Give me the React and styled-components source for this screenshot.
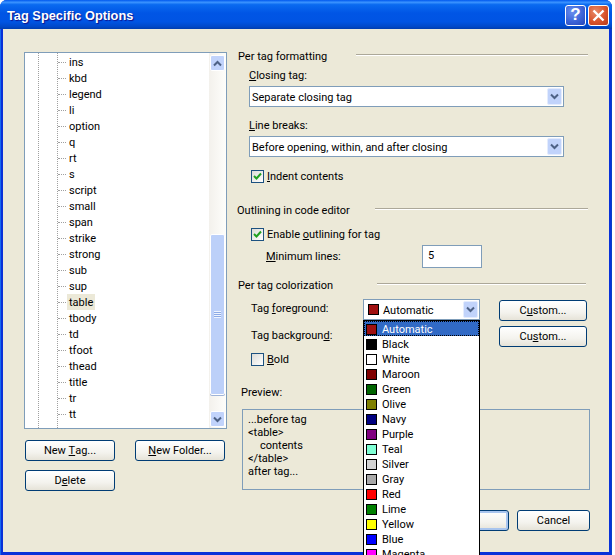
import React from "react";
import styled, { createGlobalStyle } from "styled-components";

const TAGS = ["ins", "kbd", "legend", "li", "option", "q", "rt", "s", "script", "small", "span", "strike", "strong", "sub", "sup", "table", "tbody", "td", "tfoot", "thead", "title", "tr", "tt"];

const COLORS = [
  ["Automatic", "#a01010"],
  ["Black", "#000000"],
  ["White", "#ffffff"],
  ["Maroon", "#800000"],
  ["Green", "#006400"],
  ["Olive", "#808000"],
  ["Navy", "#000080"],
  ["Purple", "#800080"],
  ["Teal", "#7fffd4"],
  ["Silver", "#d3d3d3"],
  ["Gray", "#a9a9a9"],
  ["Red", "#ff0000"],
  ["Lime", "#008000"],
  ["Yellow", "#ffff00"],
  ["Blue", "#0000ff"],
  ["Magenta", "#ff00ff"],
];

const PREVIEW = ["...before tag", "<table>", "contents", "</table>", "after tag..."];

function Chevron({ up }) {
  return (
    <svg width="9" height="7" viewBox="0 0 9 7">
      <path d={up ? "M1 5.5 L4.5 2 L8 5.5" : "M1 1.5 L4.5 5 L8 1.5"} fill="none" stroke="#4d6185" strokeWidth="2" />
    </svg>
  );
}

function Check({ checked, children }) {
  return (
    <CheckRow>
      <CheckBox>
        {checked && (
          <svg width="11" height="11" viewBox="0 0 11 11">
            <path d="M2 5 L4.5 7.5 L9 2.5" fill="none" stroke="#21a121" strokeWidth="2" />
          </svg>
        )}
      </CheckBox>
      <span>{children}</span>
    </CheckRow>
  );
}

function Combo({ children }) {
  return (
    <ComboBox>
      <ComboText>{children}</ComboText>
      <ComboArrow>
        <Chevron />
      </ComboArrow>
    </ComboBox>
  );
}

function App() {
  return (
    <Window>
      <GlobalStyle />
      <TitleBar>
        <Title>Tag Specific Options</Title>
        <TitleButtons>
          <HelpButton>?</HelpButton>
          <CloseButton>
            <svg width="13" height="13" viewBox="0 0 13 13">
              <path d="M1.5 1.5 L11.5 11.5 M11.5 1.5 L1.5 11.5" stroke="#fff" strokeWidth="2.4" />
            </svg>
          </CloseButton>
        </TitleButtons>
      </TitleBar>
      <Client>
        <LeftColumn>
          <Tree>
            <TreeGuide />
            <TreeGuideInner />
            <TreeList>
              {TAGS.map((tag) => (
                <TreeItem key={tag}>
                  <TreeLabel $selected={tag === "table"}>{tag}</TreeLabel>
                </TreeItem>
              ))}
            </TreeList>
            <ScrollBar>
              <ScrollButton>
                <Chevron up />
              </ScrollButton>
              <ScrollTrack>
                <ScrollThumb>
                  <Grip />
                </ScrollThumb>
              </ScrollTrack>
              <ScrollButton>
                <Chevron />
              </ScrollButton>
            </ScrollBar>
          </Tree>
          <TreeButtons>
            <Button>
              New <u>T</u>ag...
            </Button>
            <Button>
              <u>N</u>ew Folder...
            </Button>
            <Button>
              D<u>e</u>lete
            </Button>
          </TreeButtons>
        </LeftColumn>

        <RightColumn>
          <Heading $line={232}>Per tag formatting</Heading>
          <FieldGroup>
            <Field>
              <FieldLabel>
                <u>C</u>losing tag:
              </FieldLabel>
              <Combo>Separate closing tag</Combo>
            </Field>
            <Field>
              <FieldLabel>
                <u>L</u>ine breaks:
              </FieldLabel>
              <Combo>Before opening, within, and after closing</Combo>
            </Field>
          </FieldGroup>
          <CheckSlot $top={12}>
            <Check checked>
              <u>I</u>ndent contents
            </Check>
          </CheckSlot>

          <Heading $line={213} $top={19} $inset={-1}>
            Outlining in code editor
          </Heading>
          <CheckSlot $top={10}>
            <Check checked>
              Enable <u>o</u>utlining for tag
            </Check>
          </CheckSlot>
          <MinLines>
            <span>
              <u>M</u>inimum lines:
            </span>
            <NumberBox>5</NumberBox>
          </MinLines>

          <Heading $line={209} $top={10} $end={1}>
            Per tag colorization
          </Heading>
          <ColorRow>
            <ColorLabel>
              Tag <u>f</u>oreground:
            </ColorLabel>
            <ColorCombo>
              <Swatch $color="#a01010" />
              <ColorValue>Automatic</ColorValue>
              <ComboArrow>
                <Chevron />
              </ComboArrow>
              <Dropdown>
                {COLORS.map(([name, color]) => (
                  <DropItem key={name} $active={name === "Automatic"}>
                    <Swatch $color={color} />
                    {name}
                  </DropItem>
                ))}
              </Dropdown>
            </ColorCombo>
            <CustomButton>
              C<u>u</u>stom...
            </CustomButton>
          </ColorRow>
          <ColorRow $second>
            <ColorLabel>
              Tag backgroun<u>d</u>:
            </ColorLabel>
            <span />
            <CustomButton $second>
              Cu<u>s</u>tom...
            </CustomButton>
          </ColorRow>
          <CheckSlot $top={5}>
            <Check>
              <u>B</u>old
            </Check>
          </CheckSlot>

          <PreviewLabel>Preview:</PreviewLabel>
          <PreviewBox>
            {PREVIEW.map((line) => (
              <PreviewLine key={line} $indent={line === "contents"}>
                {line}
              </PreviewLine>
            ))}
          </PreviewBox>
          <Footer>
            <OkButton>OK</OkButton>
            <FooterButton>Cancel</FooterButton>
          </Footer>
        </RightColumn>
      </Client>
    </Window>
  );
}

const GlobalStyle = createGlobalStyle`
  html, body {
    margin: 0;
    padding: 0;
    width: 615px;
    height: 555px;
    overflow: hidden;
    background: #fff;
  }
  body {
    font-family: Roboto, Tahoma, sans-serif;
    font-size: 11px;
    color: #000;
  }
`;

const Window = styled.div`
  width: 612px;
  height: 555px;
  display: flex;
  flex-direction: column;
  background: #0831d9;
  box-shadow: inset 1px 0 0 #166aee, inset -1px 0 0 #0a3fc8;
  border-radius: 7px 7px 0 0;
  overflow: hidden;
  box-sizing: border-box;
`;

const TitleBar = styled.div`
  height: 29px;
  flex: none;
  display: flex;
  align-items: center;
  justify-content: space-between;
  padding: 1px 3px 0 7px;
  box-sizing: border-box;
  background: linear-gradient(
    180deg,
    #0058ee 0%,
    #3a93ff 8%,
    #0a6af0 16%,
    #0055e5 45%,
    #0054e3 75%,
    #0048c8 92%,
    #003dae 100%
  );
`;

const Title = styled.div`
  font-family: "Liberation Sans", Arial, sans-serif;
  font-weight: bold;
  font-size: 12.8px;
  color: #fff;
  text-shadow: 1px 1px 1px #0f1089;
`;

const TitleButtons = styled.div`
  display: flex;
  gap: 2px;
`;

const TitleBtn = styled.div`
  width: 21px;
  height: 21px;
  box-sizing: border-box;
  border: 1px solid #fff;
  border-radius: 3px;
  display: flex;
  align-items: center;
  justify-content: center;
  color: #fff;
`;

const HelpButton = styled(TitleBtn)`
  background: radial-gradient(circle at 35% 30%, #6b8fee 0%, #3c64d8 55%, #2546b8 100%);
  font-family: "Liberation Sans", Arial, sans-serif;
  font-weight: bold;
  font-size: 17px;
`;

const CloseButton = styled(TitleBtn)`
  background: radial-gradient(circle at 35% 30%, #e88a6a 0%, #d8542c 55%, #b83a18 100%);
`;

const Client = styled.div`
  flex: 1;
  min-height: 0;
  margin: 0 3px 3px;
  background: #ece9d8;
  display: grid;
  grid-template-columns: 222px minmax(0, 1fr);
  position: relative;
`;

const LeftColumn = styled.div`
  padding: 23px 0 0 21px;
  display: flex;
  flex-direction: column;
  gap: 11px;
`;

const Tree = styled.div`
  width: 203px;
  height: 377px;
  box-sizing: border-box;
  border: 1px solid #7f9db9;
  background: #fff;
  position: relative;
  display: flex;
  justify-content: flex-end;
`;

const TreeGuide = styled.div`
  position: absolute;
  left: 13px;
  top: 0;
  bottom: 0;
  border-left: 1px dotted #a0a0a0;
`;

const TreeGuideInner = styled(TreeGuide)`
  left: 32px;
`;

const TreeList = styled.div`
  flex: 1;
  padding: 1px 0 0 42px;
`;

const TreeItem = styled.div`
  height: 16px;
  display: flex;
  align-items: center;
  position: relative;
  &::before {
    content: "";
    position: absolute;
    left: -9px;
    width: 8px;
    border-top: 1px dotted #a0a0a0;
  }
`;

const TreeLabel = styled.span`
  height: 16px;
  box-sizing: border-box;
  padding: 1px 2px 0;
  line-height: 16px;
  background: ${(props) => (props.$selected ? "#ece9d8" : "transparent")};
`;

const ScrollBar = styled.div`
  width: 17px;
  flex: none;
  background: linear-gradient(90deg, #f3f1ec, #fefefb);
  display: flex;
  flex-direction: column;
`;

const ScrollButton = styled.div`
  height: 16px;
  margin: 2px 1px 1px;
  flex: none;
  box-sizing: border-box;
  border: 1px solid #fff;
  border-radius: 2px;
  background: #c1d3fb;
  display: flex;
  align-items: center;
  justify-content: center;
`;

const ScrollTrack = styled.div`
  flex: 1;
  display: flex;
  flex-direction: column;
  justify-content: flex-end;
  padding-bottom: 14px;
`;

const ScrollThumb = styled.div`
  height: 161px;
  margin: 0 1px;
  box-sizing: border-box;
  border: 1px solid #fff;
  border-radius: 2px;
  background: #bcd0f9;
  box-shadow: 0 1px 0 #9fb4d8;
  display: flex;
  align-items: center;
  justify-content: center;
`;

const Grip = styled.div`
  width: 7px;
  height: 7px;
  background: repeating-linear-gradient(180deg, #eef4fe 0 1px, #8caae6 1px 2px);
`;

const TreeButtons = styled.div`
  display: grid;
  grid-template-columns: 90px 90px;
  column-gap: 20px;
  row-gap: 9px;
  padding-left: 1px;
`;

const Button = styled.div`
  height: 21px;
  box-sizing: border-box;
  border: 1px solid #003c74;
  border-radius: 3px;
  background: linear-gradient(180deg, #ffffff 0%, #f4f3ee 60%, #e6e3d8 100%);
  display: flex;
  align-items: center;
  justify-content: center;
  white-space: pre;
`;

const RightColumn = styled.div`
  padding: 20px 22px 0 13px;
  display: flex;
  flex-direction: column;
  align-items: stretch;
`;

const Heading = styled.div`
  height: 14px;
  line-height: 16px;
  margin-top: ${(props) => props.$top || 0}px;
  margin-left: ${(props) => props.$inset || 0}px;
  margin-right: ${(props) => (props.$end ? props.$end : -1)}px;
  display: flex;
  align-items: flex-start;
  white-space: nowrap;
  &::after {
    content: "";
    flex: none;
    align-self: center;
    width: ${(props) => props.$line}px;
    margin: 0 0 3px auto;
    height: 1px;
    background: #aca899;
    box-shadow: 0 1px 0 #fff;
  }
`;

const FieldGroup = styled.div`
  width: 315px;
  margin: 5px 0 0 11px;
  display: flex;
  flex-direction: column;
  gap: 11px;
`;

const Field = styled.div`
  display: flex;
  flex-direction: column;
  gap: 4px;
`;

const FieldLabel = styled.div`
  height: 14px;
  line-height: 16px;
`;

const ComboBox = styled.div`
  height: 21px;
  box-sizing: border-box;
  border: 1px solid #7f9db9;
  background: #fff;
  display: flex;
  align-items: center;
  justify-content: space-between;
`;

const ComboText = styled.div`
  padding: 2px 0 0 2px;
`;

const ComboArrow = styled.div`
  width: 15px;
  height: 17px;
  margin-right: 1px;
  flex: none;
  border-radius: 2px;
  background: #c1d3fb;
  border: 1px solid #e4ecfd;
  box-sizing: border-box;
  display: flex;
  align-items: center;
  justify-content: center;
`;

const CheckSlot = styled.div`
  margin: ${(props) => props.$top}px 0 0 13px;
`;

const CheckRow = styled.div`
  height: 15px;
  display: flex;
  align-items: center;
  gap: 3px;
`;

const CheckBox = styled.div`
  width: 13px;
  height: 13px;
  flex: none;
  box-sizing: border-box;
  border: 1px solid #1c5180;
  background: linear-gradient(135deg, #dcdcd7, #ffffff);
  display: flex;
  align-items: center;
  justify-content: center;
`;

const MinLines = styled.div`
  margin: 3px 0 0 28px;
  display: flex;
  align-items: center;
  justify-content: space-between;
  width: 216px;
`;

const NumberBox = styled.div`
  width: 60px;
  height: 23px;
  box-sizing: border-box;
  border: 1px solid #7f9db9;
  background: #fff;
  padding: 3px 0 0 5px;
`;

const ColorRow = styled.div`
  margin: ${(props) => (props.$second ? "5px" : "7px")} 0 0 13px;
  height: ${(props) => (props.$second ? "21px" : "22px")};
  display: grid;
  grid-template-columns: 112px 136px 88px;
  align-items: start;
`;

const ColorLabel = styled.div`
  margin-top: 3px;
  line-height: 14px;
  white-space: nowrap;
`;

const ColorCombo = styled.div`
  width: 117px;
  height: 21px;
  box-sizing: border-box;
  border: 1px solid #7f9db9;
  background: #fff;
  display: flex;
  align-items: center;
  padding-left: 4px;
  position: relative;
`;

const ColorValue = styled.div`
  flex: 1;
  padding: 2px 0 0 4px;
`;

const Swatch = styled.span`
  width: 11px;
  height: 11px;
  flex: none;
  box-sizing: border-box;
  border: 1px solid #000;
  background: ${(props) => props.$color};
  display: inline-block;
`;

const Dropdown = styled.div`
  position: absolute;
  left: -1px;
  top: 20px;
  width: 117px;
  height: 260px;
  box-sizing: border-box;
  border: 1px solid #000;
  background: #fff;
  z-index: 5;
  overflow: hidden;
`;

const DropItem = styled.div`
  height: 15px;
  box-sizing: border-box;
  display: flex;
  align-items: center;
  gap: 5px;
  padding: 2px 0 0 2px;
  color: ${(props) => (props.$active ? "#fff" : "#000")};
  background: ${(props) => (props.$active ? "#316ac5" : "transparent")};
  outline: ${(props) => (props.$active ? "1px dotted #000" : "none")};
  outline-offset: -1px;
`;

const CustomButton = styled(Button)`
  width: 88px;
  margin-top: ${(props) => (props.$second ? "0" : "1px")};
`;

const PreviewLabel = styled.div`
  margin: 18px 0 0 3px;
  height: 14px;
  line-height: 16px;
`;

const PreviewBox = styled.div`
  margin: 10px 0 0 4px;
  width: 348px;
  height: 81px;
  box-sizing: border-box;
  border: 1px solid #7f9db9;
  padding: 3px 0 0 5px;
`;

const PreviewLine = styled.div`
  height: 13px;
  line-height: 13px;
  padding-left: ${(props) => (props.$indent ? "12px" : "0")};
`;

const Footer = styled.div`
  margin: 20px -3px 0 0;
  display: flex;
  justify-content: flex-end;
  gap: 8px;
`;

const FooterButton = styled(Button)`
  width: 73px;
`;

const OkButton = styled(FooterButton)`
  box-shadow: inset 0 0 0 2px #a9c5ee;
`;

export default App;
